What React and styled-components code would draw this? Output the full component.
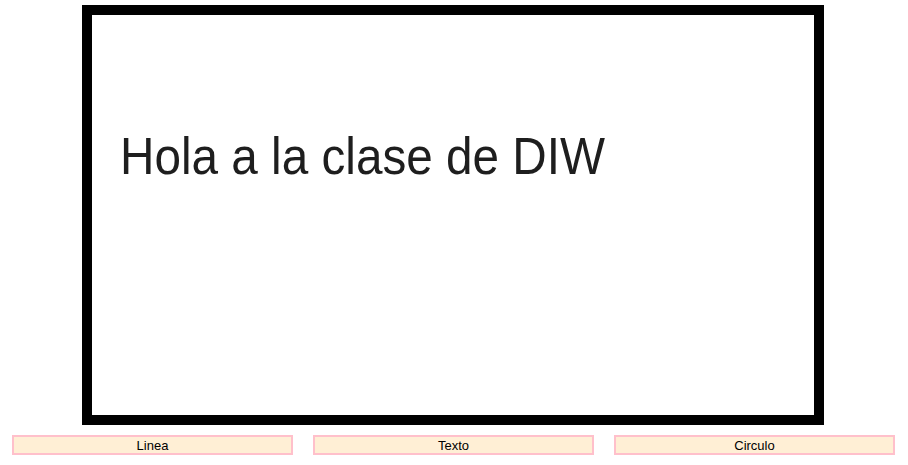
import React from "react";
import styled, { createGlobalStyle } from "styled-components";

const GlobalStyle = createGlobalStyle`
  body {
    margin: 0;
    background: #ffffff;
    font-family: "Liberation Sans", Arial, sans-serif;
  }
`;

const Page = styled.div`
  width: 908px;
  padding-top: 5px;
  display: flex;
  flex-direction: column;
`;

const Board = styled.div`
  align-self: center;
  margin-left: -2px;
  width: 742px;
  height: 420px;
  box-sizing: border-box;
  border: 10px solid #000000;
  background: #ffffff;
  padding: 111px 0 0 28px;
`;

// canvas text is stretched a little taller than it is wide
const BoardText = styled.div`
  font-family: "Liberation Sans", Arial, sans-serif;
  font-size: 52px;
  line-height: normal;
  color: #1e1e1e;
  white-space: nowrap;
  transform: scaleX(0.917);
  transform-origin: left center;
  filter: blur(0.4px);
`;

const Toolbar = styled.div`
  display: flex;
  gap: 20px;
  margin-top: 10px;
  padding-left: 12px;
`;

const ToolButton = styled.button`
  width: 281px;
  height: 20px;
  padding: 1px 0 0;
  border: 2px solid #ffc0cb;
  background: #ffefd5;
  color: #000000;
  font-family: "Liberation Sans", Arial, sans-serif;
  font-size: 13px;
  line-height: 15px;
  cursor: pointer;
`;

const tools = ["Linea", "Texto", "Circulo"];

export default function App() {
  return (
    <>
      <GlobalStyle />
      <Page>
        <Board>
          <BoardText>Hola a la clase de DIW</BoardText>
        </Board>
        <Toolbar>
          {tools.map((t) => (
            <ToolButton key={t}>{t}</ToolButton>
          ))}
        </Toolbar>
      </Page>
    </>
  );
}
